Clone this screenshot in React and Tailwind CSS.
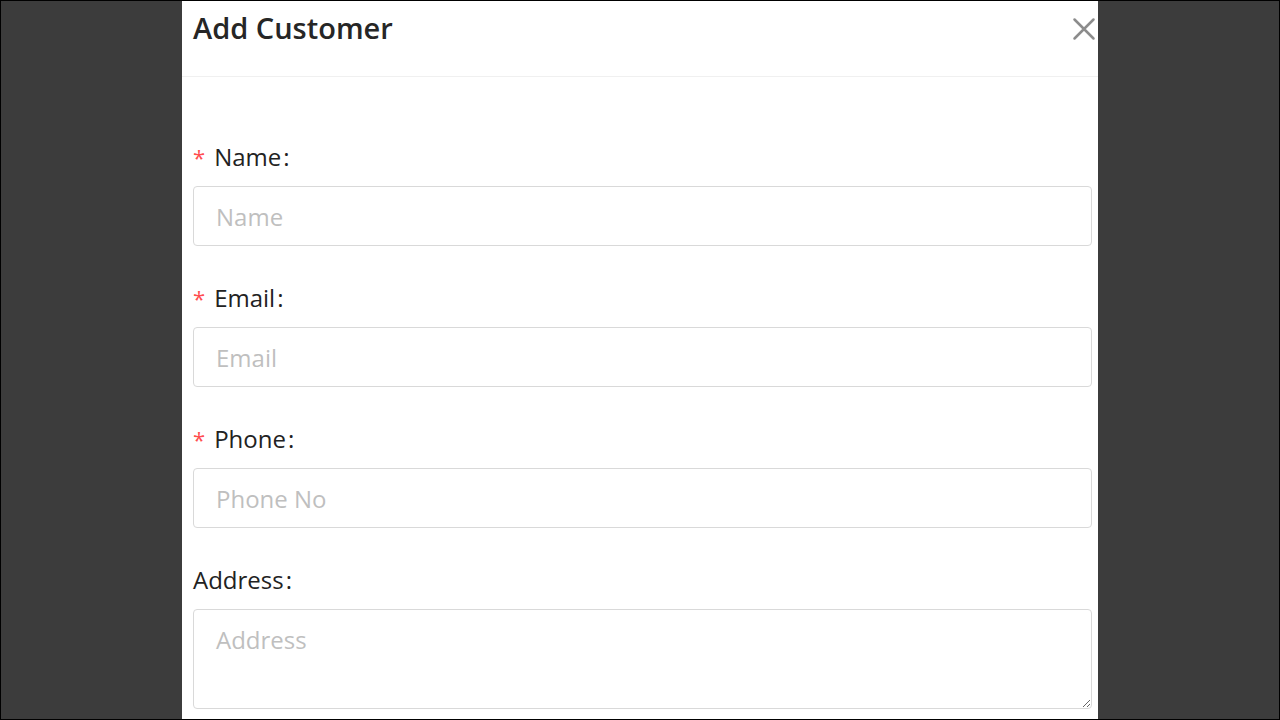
const fields = [
  { label: "Name", placeholder: "Name", required: true },
  { label: "Email", placeholder: "Email", required: true },
  { label: "Phone", placeholder: "Phone No", required: true },
];

const inputStyles =
  "block h-[60px] w-full rounded-[4px] border border-[#d9d9d9] bg-white px-[22px] text-[24px] text-[#333] outline-none placeholder:text-[#bfbfbf]";

const Label = ({ text, required }) => (
  <div className="mb-[11px] flex h-[36px] items-center text-[24px] text-[#222]">
    {required && <span className="mr-[9px] text-[22px] text-[#ff4d4f]">*</span>}
    <span>{text}</span>
    <span className="ml-[2px]">:</span>
  </div>
);

export default function App() {
  return (
    <div
      className="flex h-[720px] w-[1280px] overflow-hidden border border-black bg-[#3c3c3c]"
      style={{ fontFamily: '"Open Sans", "Noto Sans", sans-serif' }}
    >
      <div className="ml-[181px] h-full w-[916px] bg-white">
        <div className="flex h-[76px] items-start justify-between border-b border-[#f0f0f0] pl-[11px] pr-[2px]">
          <h3 className="mt-[5px] text-[29px] font-semibold text-[#262626]">Add Customer</h3>
          <button type="button" className="mt-[16px] text-[#8c8c8c]">
            <svg width="24" height="24" viewBox="0 0 24 24" fill="none" stroke="currentColor" strokeWidth="2.5" strokeLinecap="round">
              <path d="M2.5 2.5 L21.5 21.5 M21.5 2.5 L2.5 21.5" />
            </svg>
          </button>
        </div>

        <div className="pl-[11px] pr-[6px] pt-[62px]">
          {fields.map((field) => (
            <div key={field.label} className="mb-[34px]">
              <Label text={field.label} required={field.required} />
              <input className={inputStyles} placeholder={field.placeholder} />
            </div>
          ))}
          <div>
            <Label text="Address" />
            <textarea
              className="block h-[100px] w-full rounded-[4px] border border-[#d9d9d9] bg-white px-[22px] py-[12px] text-[24px] text-[#333] outline-none placeholder:text-[#bfbfbf]"
              placeholder="Address"
            />
          </div>
        </div>
      </div>
    </div>
  );
}
